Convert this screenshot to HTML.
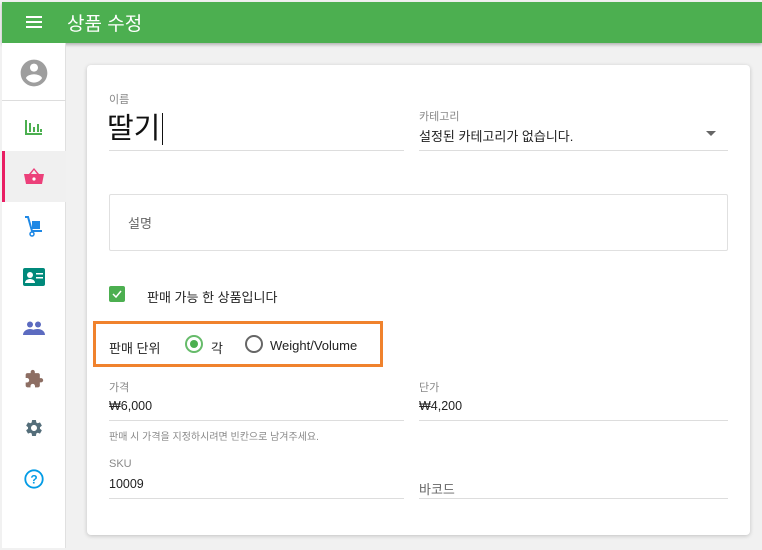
<!DOCTYPE html>
<html><head><meta charset="utf-8"><style>
*{margin:0;padding:0;box-sizing:border-box}
body{width:762px;height:550px;background:#f1f1f1;font-family:"Liberation Sans","Noto Sans CJK KR",sans-serif;position:relative;overflow:hidden;color:#222}
.a{position:absolute}
.hdr{left:2px;top:2px;width:760px;height:41px;background:#4caf50;box-shadow:0 2px 3px rgba(0,0,0,.25)}
.side{left:2px;top:43px;width:64px;height:505px;background:#fff;border-right:1px solid #e0e0e0}
.card{left:87px;top:65px;width:663px;height:470px;background:#fff;border-radius:4px;box-shadow:0 1px 4px rgba(0,0,0,.2)}
.lbl{font-size:11px;color:#888}
.val{font-size:13px;color:#222}
.line{height:1px;background:#ddd}
</style></head><body>
<div class="a hdr">
 <div class="a" style="left:24px;top:14px;width:16px;height:2px;background:#fff;box-shadow:0 5px 0 #fff,0 10px 0 #fff"></div>
 <div class="a" style="left:65px;top:7px;color:#fff;font-size:19px">상품 수정</div>
</div>
<div class="a side">
 <svg class="a" style="left:16px;top:14px" width="32" height="32" viewBox="0 0 24 24"><path fill="#9e9e9e" d="M12 2C6.48 2 2 6.48 2 12s4.48 10 10 10 10-4.48 10-10S17.52 2 12 2zm0 3c1.66 0 3 1.34 3 3s-1.34 3-3 3-3-1.34-3-3 1.34-3 3-3zm0 14.2c-2.5 0-4.71-1.28-6-3.22.03-1.99 4-3.08 6-3.08 1.99 0 5.970 1.09 6 3.08-1.29 1.940-3.5 3.22-6 3.22z"/></svg>
 <div class="a" style="left:0;top:57px;width:64px;height:1px;background:#ddd"></div>
 <svg class="a" style="left:22px;top:76px" width="20" height="16" viewBox="0 0 20 16"><path fill="#4caf50" d="M1 1h2v13h15v2H1zM5 4h2v9H5zM9 8h2v5H9zM13 5h2v8h-2zM16 10h2v3h-2z"/></svg>
 <div class="a" style="left:0;top:108px;width:64px;height:51px;background:#f0f0f0;border-left:3px solid #e91e63"></div>
 <svg class="a" style="left:21px;top:124px" width="22" height="18" viewBox="0 0 22 18"><path fill="#ec407a" d="M11 1 6 7H1l2 10h16l2-10h-5zM8 7l3-4 3 4z"/><circle cx="11" cy="12" r="1.6" fill="#fff"/></svg>
 <svg class="a" style="left:21px;top:172px" width="22" height="22" viewBox="0 0 22 22"><path fill="none" stroke="#1e88e5" stroke-width="2" d="M2 2h3l4 14h10"/><rect x="9" y="6" width="8" height="8" fill="#1e88e5"/><circle cx="9" cy="19" r="2" fill="none" stroke="#1e88e5" stroke-width="1.5"/></svg>
 <svg class="a" style="left:21px;top:225px" width="22" height="18" viewBox="0 0 22 18"><rect width="22" height="18" rx="2" fill="#00897b"/><circle cx="7" cy="7" r="3" fill="#fff"/><path fill="#fff" d="M2 15c0-3 3-4 5-4s5 1 5 4zM13 5h7v1.5h-7zM13 9h7v1.5h-7z"/></svg>
 <svg class="a" style="left:21px;top:278px" width="22" height="14" viewBox="0 0 22 14"><circle cx="7" cy="3.5" r="3" fill="#5c6bc0"/><circle cx="15" cy="3.5" r="3" fill="#5c6bc0"/><path fill="#5c6bc0" d="M0 14c0-4 4-6 7-6s7 2 7 6zM12 14c0-2-1-4-2-5 2-1 4-1 5-1 3 0 7 2 7 6z"/></svg>
 <svg class="a" style="left:22px;top:326px" width="20" height="20" viewBox="0 0 24 24"><path fill="#8d6e63" d="M20.5 11H19V7c0-1.1-.9-2-2-2h-4V3.5C13 2.12 11.88 1 10.5 1S8 2.12 8 3.5V5H4c-1.1 0-2 .9-2 2v3.8h1.5c1.49 0 2.7 1.21 2.7 2.7s-1.21 2.7-2.7 2.7H2V20c0 1.1.9 2 2 2h3.8v-1.5c0-1.49 1.21-2.7 2.7-2.7 1.49 0 2.7 1.21 2.7 2.7V22H17c1.1 0 2-.9 2-2v-4h1.5c1.38 0 2.5-1.120 2.5-2.5S21.88 11 20.5 11z"/></svg>
 <svg class="a" style="left:22px;top:375px" width="20" height="20" viewBox="0 0 24 24"><path fill="#546e7a" d="M19.14 12.94c.04-.3.06-.61.06-.94 0-.32-.02-.64-.07-.94l2.03-1.58a.49.49 0 0 0 .12-.61l-1.92-3.32a.49.49 0 0 0-.59-.22l-2.39.96c-.5-.38-1.03-.7-1.62-.94l-.36-2.54a.48.48 0 0 0-.48-.41h-3.84c-.24 0-.43.17-.47.41l-.36 2.54c-.59.24-1.13.57-1.62.94l-2.39-.96c-.22-.08-.47 0-.59.22L2.74 8.87c-.12.21-.08.47.12.61l2.03 1.58c-.05.3-.09.63-.09.94s.02.64.07.94l-2.03 1.58a.49.49 0 0 0-.12.61l1.92 3.32c.12.22.37.29.59.22l2.39-.96c.5.38 1.03.7 1.62.94l.36 2.54c.05.24.24.41.48.41h3.84c.24 0 .44-.17.47-.41l.36-2.54c.59-.24 1.13-.56 1.62-.94l2.39.96c.22.08.47 0 .59-.22l1.92-3.32c.12-.22.07-.47-.12-.61l-2.010-1.58zM12 15.6c-1.98 0-3.6-1.62-3.6-3.6s1.62-3.6 3.6-3.6 3.6 1.62 3.6 3.6-1.62 3.6-3.6 3.6z"/></svg>
 <svg class="a" style="left:21px;top:425px" width="22" height="22" viewBox="0 0 24 24"><circle cx="12" cy="12" r="9.5" fill="none" stroke="#039be5" stroke-width="2"/><text x="12" y="17" text-anchor="middle" font-family="Liberation Sans" font-weight="bold" font-size="13" fill="#039be5">?</text></svg>
</div>
<div class="a card">
 <div class="a lbl" style="left:22px;top:26px">이름</div>
 <div class="a" style="left:20px;top:40px;font-size:29px;color:#111">딸기<span style="border-left:1px solid #111;margin-left:2px"></span></div>
 <div class="a line" style="left:22px;top:85px;width:295px"></div>
 <div class="a lbl" style="left:332px;top:43px">카테고리</div>
 <div class="a val" style="left:332px;top:61px">설정된 카테고리가 없습니다.</div>
 <div class="a" style="left:619px;top:66px;border:5px solid transparent;border-top-color:#666;border-bottom:0"></div>
 <div class="a line" style="left:332px;top:85px;width:309px"></div>
 <div class="a" style="left:22px;top:129px;width:619px;height:57px;border:1px solid #e0e0e0;border-radius:2px"></div>
 <div class="a val" style="left:41px;top:148px;color:#666">설명</div>
 <div class="a" style="left:22px;top:221px;width:16px;height:16px;background:#4caf50;border-radius:2px"></div>
 <svg class="a" style="left:24px;top:223px" width="12" height="12" viewBox="0 0 12 12"><path d="M2 6l3 3 5-6" fill="none" stroke="#fff" stroke-width="1.5"/></svg>
 <div class="a val" style="left:60px;top:222px">판매 가능 한 상품입니다</div>
 <div class="a" style="left:6px;top:256px;width:290px;height:46px;border:3px solid #f0822d"></div>
 <div class="a val" style="left:22px;top:273px">판매 단위</div>
 <div class="a" style="left:98px;top:270px;width:18px;height:18px;border:2px solid #66bb6a;border-radius:50%"></div>
 <div class="a" style="left:103px;top:275px;width:8px;height:8px;background:#4caf50;border-radius:50%"></div>
 <div class="a val" style="left:124px;top:273px">각</div>
 <div class="a" style="left:158px;top:270px;width:18px;height:18px;border:2px solid #666;border-radius:50%"></div>
 <div class="a val" style="left:183px;top:273px;font-size:13px">Weight/Volume</div>
 <div class="a lbl" style="left:22px;top:314px">가격</div>
 <div class="a val" style="left:22px;top:334px;font-size:12.5px">₩6,000</div>
 <div class="a line" style="left:22px;top:355px;width:295px"></div>
 <div class="a" style="left:22px;top:363px;font-size:10px;color:#888">판매 시 가격을 지정하시려면 빈칸으로 남겨주세요.</div>
 <div class="a lbl" style="left:332px;top:314px">단가</div>
 <div class="a val" style="left:332px;top:334px;font-size:12.5px">₩4,200</div>
 <div class="a line" style="left:332px;top:355px;width:309px"></div>
 <div class="a lbl" style="left:22px;top:393px">SKU</div>
 <div class="a val" style="left:22px;top:412px;font-size:12.5px">10009</div>
 <div class="a line" style="left:22px;top:433px;width:295px"></div>
 <div class="a val" style="left:332px;top:414px;color:#666">바코드</div>
 <div class="a line" style="left:332px;top:433px;width:309px"></div>
</div>
</body></html>
